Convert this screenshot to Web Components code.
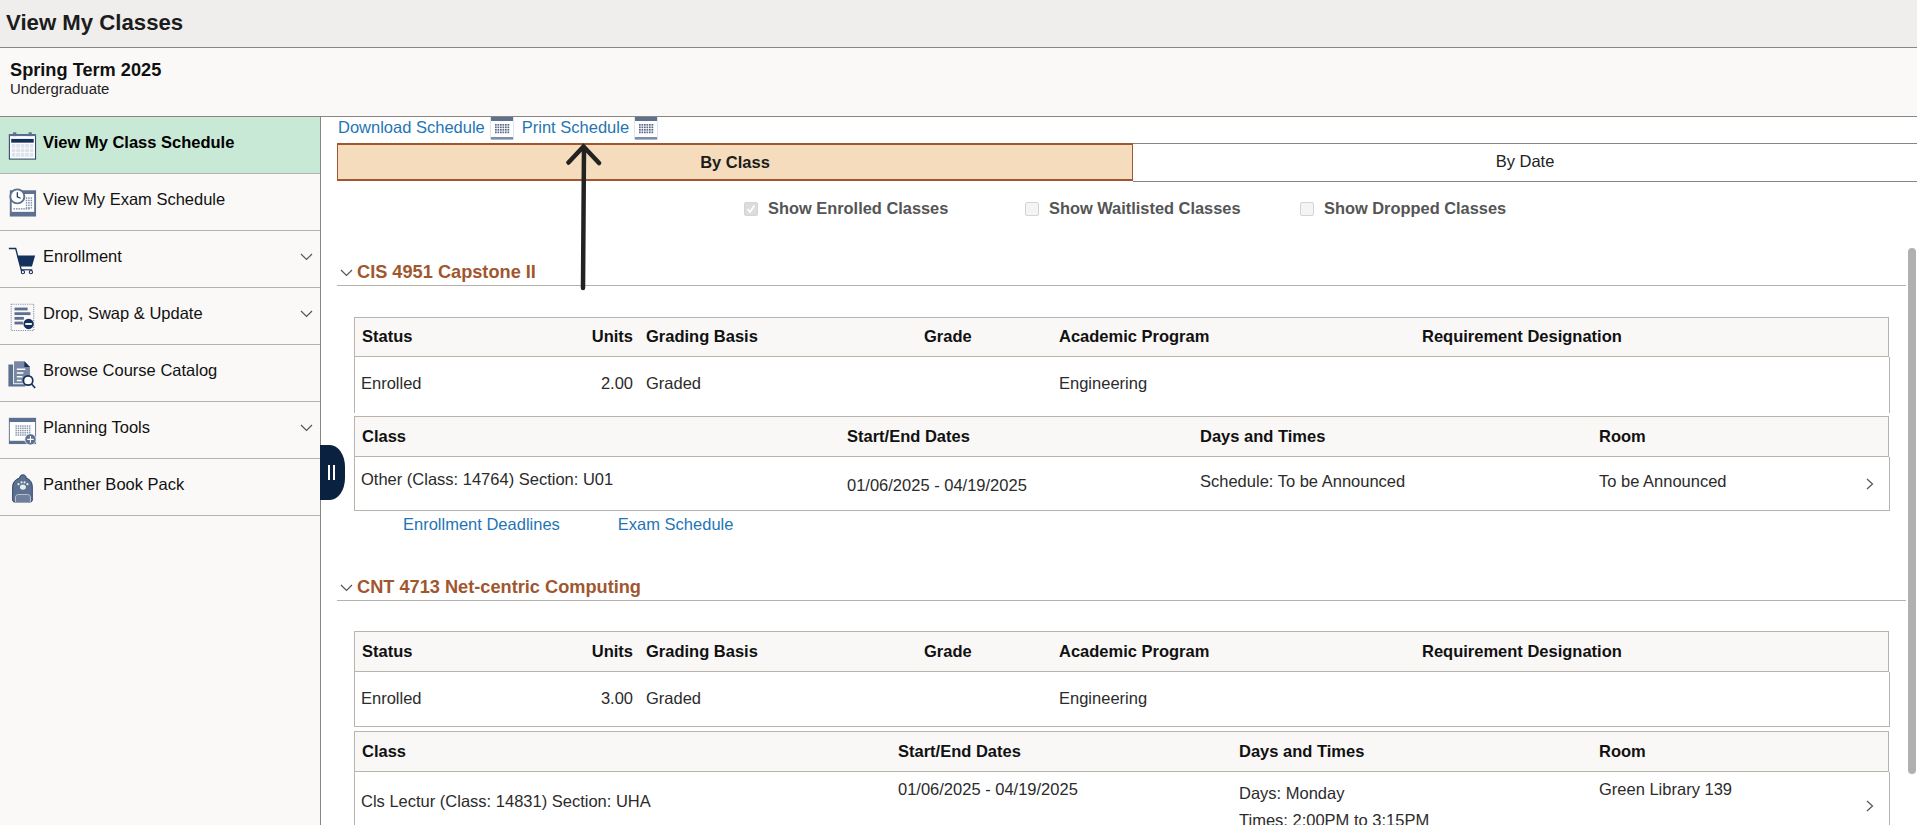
<!DOCTYPE html>
<html lang="en">
<head>
<meta charset="utf-8">
<title>View My Classes</title>
<style>
    html, body { margin: 0; height: 100%; overflow: hidden; background: #fff; }
    body { font-family: "Liberation Sans", Arial, sans-serif; font-size: 16.5px; color: #222; }
</style>
</head>
<body>
<app-shell>
    <page-header slot="header">View My Classes</page-header>
    <term-bar slot="header" term="Spring Term 2025">Undergraduate</term-bar>

    <side-nav slot="nav">
        <nav-item icon="calendar" active>View My Class Schedule</nav-item>
        <nav-item icon="clock">View My Exam Schedule</nav-item>
        <nav-item icon="cart" expand>Enrollment</nav-item>
        <nav-item icon="drop" expand>Drop, Swap &amp; Update</nav-item>
        <nav-item icon="catalog">Browse Course Catalog</nav-item>
        <nav-item icon="plan" expand>Planning Tools</nav-item>
        <nav-item icon="pack">Panther Book Pack</nav-item>
    </side-nav>

    <schedule-links></schedule-links>
    <view-tabs></view-tabs>
    <class-filters></class-filters>

    <class-section heading="CIS 4951 Capstone II">
        <info-table kind="info" head-height="40" body-height="56" open-bottom>
            <span slot="head" class="first">Status</span><span slot="head" class="num">Units</span><span slot="head">Grading Basis</span><span slot="head">Grade</span><span slot="head">Academic Program</span><span slot="head">Requirement Designation</span>
            <span class="first" style="padding-top:17px">Enrolled</span><span class="num" style="padding-top:17px">2.00</span><span style="padding-top:17px">Graded</span><span></span><span style="padding-top:17px">Engineering</span><span></span>
        </info-table>
        <info-table kind="class-a" head-height="41" body-height="54" style="margin-top:3px">
            <span slot="head" class="first">Class</span><span slot="head">Start/End Dates</span><span slot="head">Days and Times</span><span slot="head">Room</span><span slot="head"></span>
            <span class="first" style="padding-top:13px">Other (Class: 14764) Section: U01</span><span style="padding-top:19px">01/06/2025 - 04/19/2025</span><span style="padding-top:15px">Schedule: To be Announced</span><span style="padding-top:15px">To be Announced</span><row-chevron></row-chevron>
        </info-table>
        <section-links></section-links>
    </class-section>

    <class-section heading="CNT 4713 Net-centric Computing" style="--gap:30px">
        <info-table kind="info" head-height="41" body-height="55">
            <span slot="head" class="first">Status</span><span slot="head" class="num">Units</span><span slot="head">Grading Basis</span><span slot="head">Grade</span><span slot="head">Academic Program</span><span slot="head">Requirement Designation</span>
            <span class="first" style="padding-top:17px">Enrolled</span><span class="num" style="padding-top:17px">3.00</span><span style="padding-top:17px">Graded</span><span></span><span style="padding-top:17px">Engineering</span><span></span>
        </info-table>
        <info-table kind="class-b" head-height="41" body-height="68" style="margin-top:4px">
            <span slot="head" class="first">Class</span><span slot="head">Start/End Dates</span><span slot="head">Days and Times</span><span slot="head">Room</span><span slot="head"></span>
            <span class="first" style="padding-top:20px">Cls Lectur (Class: 14831) Section: UHA</span><span style="padding-top:8px">01/06/2025 - 04/19/2025</span><span style="padding-top:8px;line-height:27px">Days: Monday<br>Times: 2:00PM to 3:15PM</span><span style="padding-top:8px">Green Library 139</span><row-chevron></row-chevron>
        </info-table>
    </class-section>
</app-shell>

<script>
const NAVY = '#14305c';
const SLATE = '#5d708f';

// repeats small squares, for the day cells of the calendar icons
function dots(x, y, cols, rows, step, size, color) {
    let out = '';
    for (let r = 0; r < rows; r++) {
        for (let c = 0; c < cols; c++) {
            out += `<rect x="${x + c * step}" y="${y + r * step}" width="${size}" height="${size}" fill="${color}"/>`;
        }
    }
    return out;
}

const ICONS = {
    calendar: `
        <rect x="2.500" y="5" width="28" height="26" fill="#fff" stroke="${NAVY}"/>
        <rect x="2" y="4.500" width="29" height="2" fill="${SLATE}"/>
        <rect x="6.500" y="2.500" width="3.500" height="4" fill="${SLATE}"/>
        <rect x="23" y="2.500" width="3.500" height="4" fill="${SLATE}"/>
        <rect x="4.500" y="9.500" width="24" height="4" fill="${NAVY}"/>
        ${dots(5, 15, 5, 3, 4.800, 4, '#dfe3ec')}`,
    clock: `
        <rect x="3" y="3.500" width="28" height="28" fill="${SLATE}"/>
        <rect x="5" y="7.500" width="24" height="19" fill="#fff"/>
        ${dots(20, 11, 3, 5, 2.600, 1.600, '#8493ab')}
        ${dots(7, 22.500, 7, 1, 2.600, 1.600, '#8493ab')}
        <circle cx="11" cy="10" r="7.500" fill="#fff" stroke="${SLATE}" stroke-width="2"/>
        <path d="M11 5.500v5l3.500 1.500" fill="none" stroke="${NAVY}" stroke-width="1.300"/>`,
    cart: `
        <path d="M2 4.800h7.300L15.500 29" fill="none" stroke="${NAVY}" stroke-width="1.400"/>
        <path d="M10.600 12.200H30L26.600 24H14.500Z" fill="${NAVY}"/>
        <path d="M15 27.500H27" stroke="${NAVY}" stroke-width="1.200"/>
        <circle cx="17" cy="30" r="1.700" fill="#fff" stroke="${NAVY}" stroke-width="1.200"/>
        <circle cx="25.500" cy="30" r="1.700" fill="#fff" stroke="${NAVY}" stroke-width="1.200"/>`,
    drop: `
        <rect x="4.500" y="3.500" width="24" height="28" fill="none" stroke="#8b99b2" stroke-width="1.200" stroke-dasharray="1.300 1.100"/>
        <rect x="8" y="7" width="14" height="3" fill="${SLATE}"/>
        <rect x="8" y="12" width="17" height="3" fill="${SLATE}"/>
        <rect x="8" y="17" width="10" height="3" fill="${SLATE}"/>
        <rect x="8" y="22" width="9" height="3" fill="${SLATE}"/>
        <circle cx="23" cy="24.500" r="5.500" fill="${NAVY}"/>
        <rect x="19.500" y="23.500" width="7" height="2" fill="#fff"/>`,
    catalog: `
        <path d="M1.500 7h5v21h13v2.500H1.500Z" fill="${SLATE}"/>
        <path d="M7.500 3.500h11l6 6V27H7.500Z" fill="#7787a3"/>
        <path d="M18.500 3.500v6h6Z" fill="${NAVY}"/>
        <path d="M10.500 12h9M10.500 16h7M10.500 20h6M10.500 24h5" stroke="#fff" stroke-width="1.400"/>
        <circle cx="22.500" cy="24" r="5" fill="#fff" stroke="${NAVY}" stroke-width="1.800"/>
        <path d="M26 27.500L30 32" stroke="${NAVY}" stroke-width="1.800"/>`,
    plan: `
        <rect x="2" y="3" width="29" height="28" fill="${SLATE}"/>
        <rect x="3" y="7.500" width="27" height="20" fill="#fff"/>
        ${dots(9, 11, 7, 5, 2.400, 1.600, '#8c99af')}
        <circle cx="25" cy="26" r="6" fill="${SLATE}" stroke="#fff" stroke-width="0.800"/>
        <path d="M25 22.500v7M21.500 26h7" stroke="#fff" stroke-width="1.200"/>`,
    pack: `
        <path d="M13.500 6.500c0-2 1.200-3.500 3.500-3.500s3.500 1.500 3.500 3.500c4.500 1.500 6.500 5 6.500 9.500v14c0 1-1 2-2 2H8c-1 0-2-1-2-2V16c0-4.500 2.500-8 7.500-9.500Z" fill="#5d708f" stroke="${NAVY}" stroke-width="0.900"/>
        <path d="M9 32v-5c0-2 2-3 3-3h10c1 0 3 1 3 3v5" fill="#6d7f9b" stroke="#d5dae4" stroke-width="0.800"/>
        <ellipse cx="17" cy="16" rx="3.200" ry="2.800" fill="#e8ebf1"/>
        <circle cx="12.300" cy="13" r="1.200" fill="#e8ebf1"/>
        <circle cx="15.500" cy="11" r="1.200" fill="#e8ebf1"/>
        <circle cx="18.700" cy="11" r="1.200" fill="#e8ebf1"/>
        <circle cx="21.800" cy="13" r="1.200" fill="#e8ebf1"/>`
};

const CHEVRON_DOWN = `<svg width="13" height="8" viewBox="0 0 13 8"><path d="M1 1l5.500 5.500L12 1" fill="none" stroke="#555" stroke-width="1.200"/></svg>`;

class AppShell extends HTMLElement {
    constructor() {
        super();
        this.shadow = this.attachShadow({ mode: 'open' });
    }
    connectedCallback() {
        this.shadow.innerHTML = `
        <style>
            :host { display: flex; flex-direction: column; height: 825px; overflow: hidden; }
            .body { flex: 1; min-height: 0; display: flex; position: relative; }
            .nav { flex: none; width: 320px; border-right: 1px solid #8a8580; background: #faf9f8; }
            main { flex: 1; min-width: 0; overflow: hidden; position: relative; background: #fff; }
            .handle { position: absolute; left: 320px; top: 328px; width: 25px; height: 55px; background: #0a2240; border-radius: 0 15px 15px 0 / 0 22px 22px 0; display: flex; align-items: center; justify-content: center; gap: 3px; padding-right: 3px; box-sizing: border-box; }
            .handle i { display: block; width: 2px; height: 15px; background: #fff; }
            .bar { position: absolute; right: 1px; top: 131px; width: 8px; height: 526px; background: #b0b0b0; border-radius: 4px; }
            .arrow { position: absolute; left: 240px; top: 24px; }
        </style>
        <slot name="header"></slot>
        <div class="body">
            <div class="nav"><slot name="nav"></slot></div>
            <main>
                <slot></slot>
                <div class="bar"></div>
                <svg class="arrow" width="44" height="150" viewBox="0 0 44 150">
                    <path d="M22 147L23 6M7.500 21.500L22.500 5.500L38 22" fill="none" stroke="#222" stroke-width="4.500" stroke-linecap="round" stroke-linejoin="miter"/>
                </svg>
            </main>
            <div class="handle"><i></i><i></i></div>
        </div>`;
    }
}
customElements.define('app-shell', AppShell);

class PageHeader extends HTMLElement {
    constructor() {
        super();
        this.attachShadow({ mode: 'open' }).innerHTML = `
        <style>
            :host { display: flex; align-items: center; box-sizing: border-box; height: 48px; padding: 0 0 2px 6px; background: #efeeed; border-bottom: 1px solid #8a8580; font-size: 22.200px; font-weight: bold; color: #1c1c1c; }
        </style>
        <slot></slot>`;
    }
}
customElements.define('page-header', PageHeader);

class TermBar extends HTMLElement {
    constructor() {
        super();
        this.shadow = this.attachShadow({ mode: 'open' });
    }
    connectedCallback() {
        this.shadow.innerHTML = `
        <style>
            :host { display: block; box-sizing: border-box; height: 69px; padding: 12px 0 0 10px; background: #faf9f8; border-bottom: 1px solid #8a8580; }
            b { display: block; font-size: 18.200px; line-height: 20px; color: #111; }
            span { display: block; font-size: 14.900px; line-height: 18px; color: #222; }
        </style>
        <b>${this.getAttribute('term')}</b>
        <span><slot></slot></span>`;
    }
}
customElements.define('term-bar', TermBar);

class SideNav extends HTMLElement {
    constructor() {
        super();
        this.attachShadow({ mode: 'open' }).innerHTML = `
        <style>:host { display: block; }</style>
        <slot></slot>`;
    }
}
customElements.define('side-nav', SideNav);

class NavItem extends HTMLElement {
    constructor() {
        super();
        this.shadow = this.attachShadow({ mode: 'open' });
    }
    connectedCallback() {
        const expand = this.hasAttribute('expand') ? `<span class="more">${CHEVRON_DOWN}</span>` : '';
        this.shadow.innerHTML = `
        <style>
            :host { display: flex; align-items: center; box-sizing: border-box; height: 57px; padding-left: 7px; gap: 6px; border-bottom: 1px solid #b5b1ac; font-size: 16.500px; color: #111; }
            :host([active]) { background: #c8e9d6; font-weight: bold; color: #000; }
            svg.icon { flex: none; }
            .label { flex: 1; padding-bottom: 6px; }
            .more { flex: none; display: flex; margin-right: 7px; padding-bottom: 5px; }
        </style>
        <svg class="icon" width="30" height="32" viewBox="0 0 32 32">${ICONS[this.getAttribute('icon')]}</svg>
        <span class="label"><slot></slot></span>
        ${expand}`;
    }
}
customElements.define('nav-item', NavItem);

class CalIcon extends HTMLElement {
    constructor() {
        super();
        this.attachShadow({ mode: 'open' }).innerHTML = `
        <style>:host { display: inline-flex; }</style>
        <svg width="24" height="23" viewBox="0 0 24 23">
            <rect width="24" height="23" fill="#dfe5ee"/>
            <rect x="1" y="1" width="22" height="21" fill="#fff"/>
            <rect x="1" y="0" width="22" height="4" fill="${SLATE}"/>
            <rect x="1" y="20" width="22" height="2.500" fill="#7c8da8"/>
            ${dots(5, 7, 6, 4, 2.500, 1.700, '#5a6b89')}
        </svg>`;
    }
}
customElements.define('cal-icon', CalIcon);

class ScheduleLinks extends HTMLElement {
    constructor() {
        super();
        this.attachShadow({ mode: 'open' }).innerHTML = `
        <style>
            :host { display: flex; align-items: flex-start; height: 26px; padding-left: 17px; font-size: 16.500px; color: #1f75b5; }
            span { line-height: 20px; }
            cal-icon { margin: 0 8px 0 5px; }
        </style>
        <span>Download Schedule</span><cal-icon></cal-icon>
        <span>Print Schedule</span><cal-icon></cal-icon>`;
    }
}
customElements.define('schedule-links', ScheduleLinks);

class ViewTabs extends HTMLElement {
    constructor() {
        super();
        this.attachShadow({ mode: 'open' }).innerHTML = `
        <style>
            :host { display: flex; height: 39px; margin-left: 16px; font-size: 16.500px; }
            div { display: flex; align-items: center; justify-content: center; box-sizing: border-box; }
            .on { flex: none; width: 796px; height: 38px; background: #f5dcbc; border: 1px solid #a0562f; border-width: 2px 1px 2px 1px; font-weight: bold; color: #1c1c1c; }
            .off { flex: 1; padding-bottom: 2px; border-top: 1px solid #8a8580; border-bottom: 1px solid #8a8580; color: #222; }
        </style>
        <div class="on">By Class</div>
        <div class="off">By Date</div>`;
    }
}
customElements.define('view-tabs', ViewTabs);

class ClassFilters extends HTMLElement {
    constructor() {
        super();
        this.attachShadow({ mode: 'open' }).innerHTML = `
        <style>
            :host { display: grid; grid-template-columns: 281px 275px 1fr; align-items: center; box-sizing: border-box; height: 53px; padding: 0 0 0 423px; font-size: 16.400px; font-weight: bold; color: #555; }
            label { display: flex; align-items: center; gap: 10px; }
            i { display: block; box-sizing: border-box; width: 14px; height: 14px; background: #f4f4f4; border: 1px solid #d4d4d4; border-radius: 2px; }
            i.on { background: #dcdcdc; display: flex; align-items: center; justify-content: center; }
        </style>
        <label><i class="on"><svg width="10" height="10" viewBox="0 0 10 10"><path d="M1.500 5l2.500 3L8.500 1.500" fill="none" stroke="#fff" stroke-width="1.800"/></svg></i>Show Enrolled Classes</label>
        <label><i></i>Show Waitlisted Classes</label>
        <label><i></i>Show Dropped Classes</label>`;
    }
}
customElements.define('class-filters', ClassFilters);

class ClassSection extends HTMLElement {
    constructor() {
        super();
        this.shadow = this.attachShadow({ mode: 'open' });
    }
    connectedCallback() {
        this.shadow.innerHTML = `
        <style>
            :host { display: block; margin: 0 11px 0 16px; }
            header { display: flex; align-items: flex-end; gap: 4px; box-sizing: border-box; height: 51px; padding: 0 0 3px 3px; border-bottom: 1px solid #b5b1ac; font-size: 18.200px; line-height: 20px; font-weight: bold; color: #a0572f; }
            header svg { margin-bottom: 5px; }
            .content { padding: var(--gap, 31px) 0 0 17px; }
        </style>
        <header>${CHEVRON_DOWN}<span>${this.getAttribute('heading')}</span></header>
        <div class="content"><slot></slot></div>`;
    }
}
customElements.define('class-section', ClassSection);

const TABLE_COLS = {
    'info': '179px 112px 278px 135px 363px 1fr',
    'class-a': '492px 353px 399px 1fr 38px',
    'class-b': '543px 341px 360px 1fr 38px'
};

class InfoTable extends HTMLElement {
    constructor() {
        super();
        this.shadow = this.attachShadow({ mode: 'open' });
    }
    connectedCallback() {
        const cols = TABLE_COLS[this.getAttribute('kind')];
        const headH = this.getAttribute('head-height');
        const bodyH = this.getAttribute('body-height');
        const bottom = this.hasAttribute('open-bottom') ? '0' : '1px';
        const headPad = headH === '40' ? 2 : 0;
        this.shadow.innerHTML = `
        <style>
            :host { display: block; width: 1536px; }
            .head, .body { display: grid; grid-template-columns: ${cols}; box-sizing: border-box; border: 1px solid #b9b3ad; }
            .head { height: ${headH}px; margin-right: 1px; padding-bottom: ${headPad}px; align-items: center; background: #f9f8f7; font-weight: bold; color: #111; }
            .body { height: ${bodyH}px; border-top: 0; border-bottom-width: ${bottom}; align-items: start; line-height: 18px; color: #2b2b2b; overflow: hidden; }
            ::slotted(.first) { padding-left: 6px; }
            ::slotted([slot="head"].first) { padding-left: 7px; }
            ::slotted(.num) { justify-self: end; padding-right: 13px; }
        </style>
        <div class="head"><slot name="head"></slot></div>
        <div class="body"><slot></slot></div>`;
    }
}
customElements.define('info-table', InfoTable);

class RowChevron extends HTMLElement {
    constructor() {
        super();
        this.attachShadow({ mode: 'open' }).innerHTML = `
        <style>:host { display: flex; justify-content: center; align-self: center; }</style>
        <svg width="8" height="12" viewBox="0 0 8 12"><path d="M1 1l5.500 5L1 11" fill="none" stroke="#555" stroke-width="1.200"/></svg>`;
    }
}
customElements.define('row-chevron', RowChevron);

class SectionLinks extends HTMLElement {
    constructor() {
        super();
        this.attachShadow({ mode: 'open' }).innerHTML = `
        <style>
            :host { display: flex; gap: 58px; height: 39px; padding-left: 49px; box-sizing: border-box; line-height: 26px; color: #1f75b5; }
        </style>
        <span>Enrollment Deadlines</span><span>Exam Schedule</span>`;
    }
}
customElements.define('section-links', SectionLinks);
</script>
</body>
</html>
